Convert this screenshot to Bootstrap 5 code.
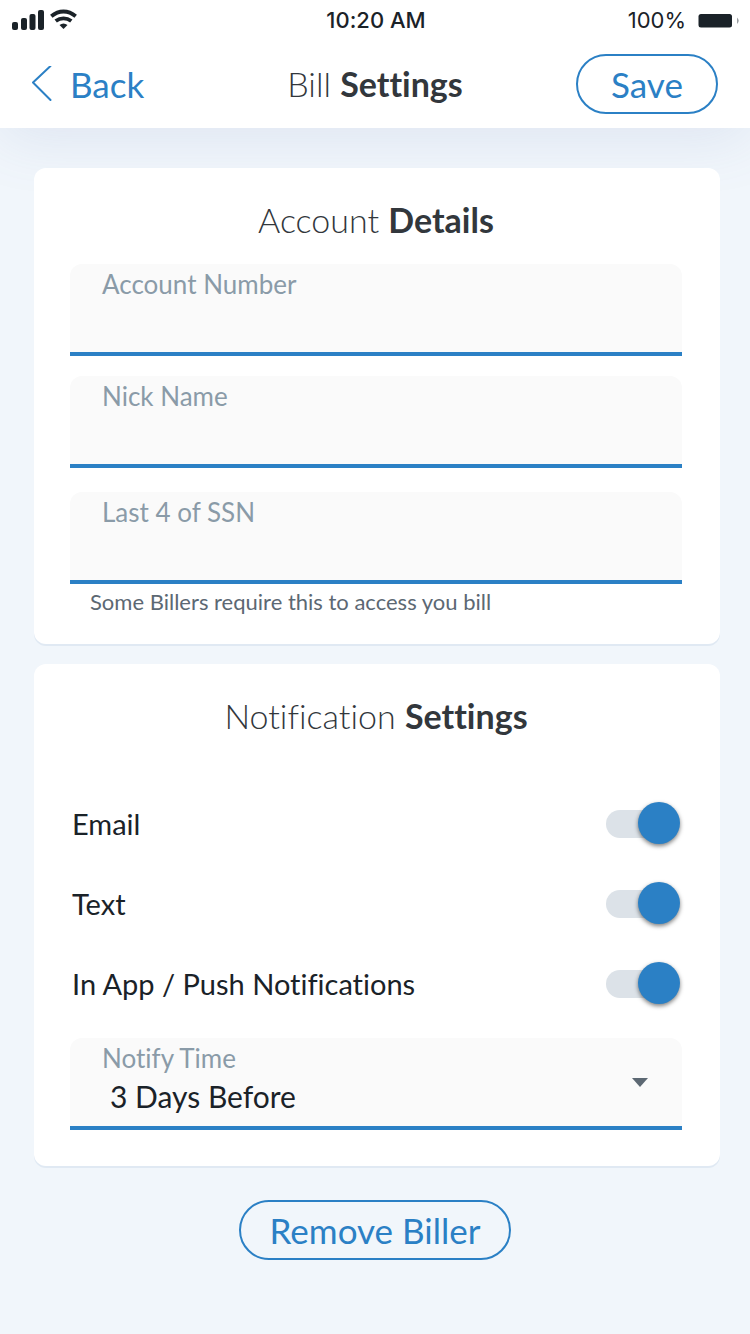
<!DOCTYPE html>
<html lang="en">
<head>
<meta charset="utf-8">
<meta name="viewport" content="width=device-width, initial-scale=1">
<title>Bill Settings</title>
<link rel="stylesheet" href="https://cdn.jsdelivr.net/npm/bootstrap@5.3.0/dist/css/bootstrap.min.css">
<style>
  :root { --brand: #2b80c5; --ink: #1a2228; --title: #32373c; }
  body { background: #f1f6fb; color: var(--ink); font-family: Lato, "Liberation Sans", sans-serif; font-size: 29px; line-height: 40px; font-variant-ligatures: none; }
  .topbar { box-shadow: 0 10px 60px rgba(92, 116, 180, .13); }
  .status { font-family: Inter, "Liberation Sans", sans-serif; font-size: 22px; height: 40px; padding: 0 10px 0 12px; }
  .status .clock { font-weight: 500; }
  .status svg { display: block; }
  .side { flex: 1 1 0; }
  .appnav { height: 88px; padding: 0 32px; }
  .back-link { color: var(--brand); font-size: 35px; gap: 18px; }
  .heading { color: var(--title); font-size: 34px; line-height: 40px; font-weight: 300; }
  .heading b { font-weight: 700; }
  .pill { --bs-btn-color: var(--brand); --bs-btn-border-color: var(--brand); --bs-btn-hover-bg: var(--brand); --bs-btn-hover-color: #fff;
    --bs-btn-font-size: 35px; --bs-btn-line-height: 36px; --bs-btn-border-width: 2px; --bs-btn-padding-y: 8px; --bs-btn-padding-x: 29px;
    height: 60px; min-width: 142px; }
  .content { padding: 40px 30px 0 34px; }
  .panel { --bs-card-border-width: 0; --bs-card-border-radius: 12px; box-shadow: 0 2px 0 #e0e9f3; padding: 32px 38px 24px 36px; margin-bottom: 20px; color: inherit; }
  .fields { display: grid; gap: 20px; margin-top: 16px; }
  .field { background: #fafafa; border-bottom: 4px solid var(--brand); border-radius: 12px 12px 0 0; padding: 0 32px; }
  .field label { display: block; color: #8a9ba8; font-size: 26px; line-height: 40px; }
  .field .form-control, .field .form-select { border: 0; border-radius: 0; background-color: transparent; box-shadow: none; color: var(--ink);
    font-size: 30px; line-height: 36px; height: 48px; padding: 0 8px 12px; }
  .field .form-select { background-image: none; }
  .caret { right: 34px; top: 40px; pointer-events: none; }
  .help { color: #5c6873; font-size: 22px; line-height: 36px; padding-left: 20px; }
  .settings { margin: 48px 0 14px; }
  .setting { height: 80px; padding-left: 2px; }
  .toggle { appearance: none; display: grid; align-items: center; width: 74px; height: 42px; margin: 0 2px 2px 0; border-radius: 21px; cursor: pointer; }
  .toggle::before, .toggle::after { content: ""; grid-area: 1 / 1; }
  .toggle::before { height: 28px; border-radius: 14px; background: #dce2e8; margin: 2px 2px 0 0; }
  .toggle::after { width: 42px; height: 42px; border-radius: 50%; background: #8a9ba8; box-shadow: 0 2px 4px rgba(0, 0, 0, .5); }
  .toggle:checked::after { justify-self: end; background: var(--brand); }
  .actions { padding: 14px 0 40px; }
</style>
</head>
<body>
<header class="topbar bg-white">
  <div class="status d-flex align-items-center">
    <div class="side d-flex align-items-center gap-1">
      <svg width="34" height="22" viewBox="0 0 34 22" fill="#1a2228" aria-label="Signal"><rect y="13" width="6" height="8" rx="2"/><rect x="9" y="9" width="6" height="12" rx="2"/><rect x="17.500" y="5" width="6" height="16" rx="2"/><rect x="26" y="1" width="6" height="20" rx="2"/></svg>
      <svg width="28" height="22" viewBox="0 0 28 22" fill="none" stroke="#1a2228" stroke-width="3.8" aria-label="Wi-Fi"><path d="M1.3 7.300Q7 2.500 13.500 2.500T25.700 7.300M5.700 12.100Q9.300 9.300 13.500 9.300T21.300 12.100"/><path d="M9.500 16Q13.500 13 17.500 16L13.500 20Z" fill="#1a2228" stroke="none"/></svg>
    </div>
    <span class="clock">10:20 AM</span>
    <div class="side d-flex align-items-center justify-content-end gap-2">
      <span>100%</span>
      <svg width="46" height="18" viewBox="0 0 46 18" aria-label="Battery full"><rect x="4.500" y="3" width="33.500" height="13.500" rx="2.500" fill="#1a2228"/><path d="M43 6.500Q46.500 9.800 43 13Z" fill="#9a9ea2"/></svg>
    </div>
  </div>
  <nav class="appnav d-flex align-items-center">
    <div class="side d-flex"><a href="#" class="back-link d-flex align-items-center text-decoration-none">
      <svg width="20" height="36" viewBox="0 0 20 36" fill="none" stroke="currentColor" stroke-width="2" stroke-linecap="round" stroke-linejoin="round" aria-hidden="true"><path d="M18.500 0L1 16.500L18.500 34"/></svg>Back</a></div>
    <h1 class="heading m-0">Bill <b>Settings</b></h1>
    <div class="side d-flex justify-content-end"><button type="button" class="btn pill rounded-pill">Save</button></div>
  </nav>
</header>

<main>
  <div class="content">
    <section class="card panel">
      <h2 class="heading text-center">Account <b>Details</b></h2>
      <div class="fields">
        <div class="field"><label for="account">Account Number</label><input id="account" class="form-control" type="text"></div>
        <div class="field"><label for="nick">Nick Name</label><input id="nick" class="form-control" type="text"></div>
        <div class="field mt-1"><label for="ssn">Last 4 of SSN</label><input id="ssn" class="form-control" type="text" inputmode="numeric" maxlength="4" aria-describedby="ssnHelp"></div>
      </div>
      <div id="ssnHelp" class="help">Some Billers require this to access you bill</div>
    </section>

    <section class="card panel">
      <h2 class="heading text-center m-0">Notification <b>Settings</b></h2>
      <div class="settings">
        <div class="setting d-flex align-items-center justify-content-between"><label for="email">Email</label><input id="email" class="toggle" type="checkbox" role="switch" checked></div>
        <div class="setting d-flex align-items-center justify-content-between"><label for="text">Text</label><input id="text" class="toggle" type="checkbox" role="switch" checked></div>
        <div class="setting d-flex align-items-center justify-content-between"><label for="push">In App / Push Notifications</label><input id="push" class="toggle" type="checkbox" role="switch" checked></div>
      </div>
      <div class="field position-relative mb-2">
        <label for="when">Notify Time</label>
        <select id="when" class="form-select"><option>3 Days Before</option><option>1 Day Before</option></select>
        <svg class="caret position-absolute" width="16" height="9" viewBox="0 0 16 9" aria-hidden="true"><path d="M0 0H16L8 9Z" fill="#5c6873"/></svg>
      </div>
      <div class="pt-1"></div>
    </section>
  </div>
  <div class="actions text-center"><button type="button" class="btn pill rounded-pill">Remove Biller</button></div>
</main>
<script src="https://cdn.jsdelivr.net/npm/bootstrap@5.3.0/dist/js/bootstrap.bundle.min.js"></script>
</body>
</html>
